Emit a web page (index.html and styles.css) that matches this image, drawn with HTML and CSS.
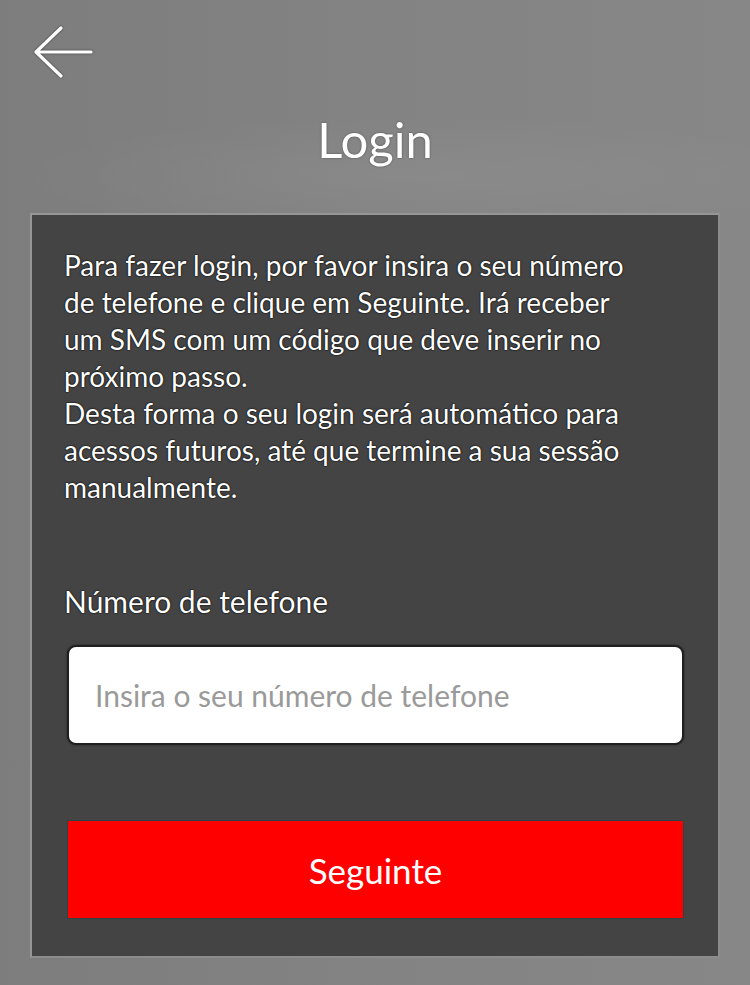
FILE: index.html
```html
<!DOCTYPE html>
<html lang="pt">
<head>
<meta charset="utf-8">
<title>Login</title>
<link rel="stylesheet" href="styles.css">
</head>
<body>
<div class="screen">
  <header class="topbar">
    <button class="back" aria-label="Voltar">
      <svg width="60" height="54" viewBox="0 0 60 54" aria-hidden="true">
        <path d="M58 26 H3 M28 2 L3 26 L28 50" fill="none" stroke="#fff" stroke-width="3.2" stroke-linecap="round" stroke-linejoin="round"/>
      </svg>
    </button>
  </header>
  <h1 class="title">Login</h1>
  <main class="card">
    <p class="intro">Para fazer login, por favor insira o seu número<br>de telefone e clique em Seguinte. Irá receber<br>um SMS com um código que deve inserir no<br>próximo passo.<br>Desta forma o seu login será automático para<br>acessos futuros, até que termine a sua sessão<br>manualmente.</p>
    <label class="label" for="phone">Número de telefone</label>
    <input class="field" id="phone" type="tel" placeholder="Insira o seu número de telefone">
    <button class="submit">Seguinte</button>
  </main>
</div>
</body>
</html>
```
FILE: styles.css
```css
* { box-sizing: border-box; }
html, body { margin: 0; padding: 0; }
body {
  width: 750px;
  height: 985px;
  overflow: hidden;
  font-family: Lato, "Open Sans", sans-serif;
  background: #818181;
}
.screen {
  width: 750px;
  height: 985px;
  background:
    radial-gradient(ellipse 420px 60px at 420px 175px, rgba(255,255,255,0.05), rgba(255,255,255,0) 100%),
    linear-gradient(90deg, #7d7d7d 0%, #838383 50%, #878787 100%);
  padding-top: 25px;
}
.topbar {
  height: 56px;
  padding-left: 33px;
  display: flex;
  align-items: center;
}
.back {
  background: none;
  border: 0;
  padding: 0;
  width: 60px;
  height: 54px;
  display: block;
  cursor: pointer;
  filter: drop-shadow(0 0 1px rgba(0,0,0,0.5));
}
.back svg { display: block; }
.title {
  margin: 28px 0 0;
  height: 104px;
  text-align: center;
  color: #fff;
  font-weight: 400;
  font-size: 49px;
  line-height: 60px;
  letter-spacing: 0;
  text-shadow: 0 0 2px rgba(0,0,0,0.5);
}
.card {
  margin-left: 30px;
  width: 690px;
  height: 745px;
  background: #444444;
  border: 2px solid #969696;
  border-right-color: #8c8c8c;
  border-bottom-color: #8c8c8c;
  padding: 32px 20px 0 32px;
  display: flex;
  flex-direction: column;
}
.intro {
  margin: 0;
  color: #fff;
  font-size: 28px;
  line-height: 37px;
  white-space: nowrap;
  text-shadow: 0 0 2px #000, 0 0 1px #000;
}
.label {
  margin-top: 78px;
  color: #fff;
  font-size: 30px;
  line-height: 34px;
  text-shadow: 0 0 2px #000, 0 0 1px #000;
}
.field {
  margin: 27px 0 0 3px;
  width: 617px;
  height: 100px;
  border: 2px solid #202020;
  border-radius: 9px;
  background: #fff;
  padding: 0 0 0 26px;
  font-family: Lato, "Open Sans", sans-serif;
  font-size: 30px;
  color: #333;
  outline: none;
  box-shadow: 0 0 2px rgba(0,0,0,0.6);
}
.field::placeholder { color: #9a9a9a; }
.submit {
  margin: 75px 0 0 3px;
  width: 617px;
  height: 99px;
  background: #ff0000;
  border: 1px solid #2b4545;
  border-radius: 0;
  color: #fff;
  font-family: Lato, "Open Sans", sans-serif;
  font-size: 35px;
  padding: 0;
  cursor: pointer;
}
```
